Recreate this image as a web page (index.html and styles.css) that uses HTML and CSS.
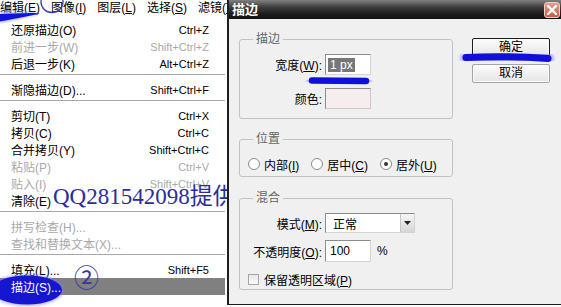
FILE: index.html
```html
<!DOCTYPE html>
<html>
<head>
<meta charset="utf-8">
<link rel="stylesheet" href="styles.css">
</head>
<body>
<div class="screen">
  <div class="app">
    <div class="menubar">
      <span class="mb-item">编辑(<u>E</u>)</span>
      <span class="mb-item">图像(<u>I</u>)</span>
      <span class="mb-item">图层(<u>L</u>)</span>
      <span class="mb-item">选择(<u>S</u>)</span>
      <span class="mb-item">滤镜(<u>T</u>)</span>
    </div>
    <ul class="menu">
      <li class="mi"><span class="lbl">还原描边(O)</span><span class="sc">Ctrl+Z</span></li>
      <li class="mi dis"><span class="lbl">前进一步(W)</span><span class="sc">Shift+Ctrl+Z</span></li>
      <li class="mi"><span class="lbl">后退一步(K)</span><span class="sc">Alt+Ctrl+Z</span></li>
      <li class="sep"></li>
      <li class="mi"><span class="lbl">渐隐描边(D)...</span><span class="sc">Shift+Ctrl+F</span></li>
      <li class="sep"></li>
      <li class="mi"><span class="lbl">剪切(T)</span><span class="sc">Ctrl+X</span></li>
      <li class="mi"><span class="lbl">拷贝(C)</span><span class="sc">Ctrl+C</span></li>
      <li class="mi"><span class="lbl">合并拷贝(Y)</span><span class="sc">Shift+Ctrl+C</span></li>
      <li class="mi dis"><span class="lbl">粘贴(P)</span><span class="sc">Ctrl+V</span></li>
      <li class="mi dis"><span class="lbl">贴入(I)</span><span class="sc">Shift+Ctrl+V</span></li>
      <li class="mi"><span class="lbl">清除(E)</span></li>
      <li class="sep"></li>
      <li class="mi dis"><span class="lbl">拼写检查(H)...</span></li>
      <li class="mi dis"><span class="lbl">查找和替换文本(X)...</span></li>
      <li class="sep"></li>
      <li class="mi"><span class="lbl">填充(L)...</span><span class="sc">Shift+F5</span></li>
      <li class="mi hl"><span class="lbl">描边(S)...</span></li>
    </ul>
    <div class="qq">QQ281542098提供</div>
    <div class="circ2">②</div>
    <svg class="blob" width="80" height="45" viewBox="0 0 80 45">
      <defs>
        <filter id="bsoft" x="-30%" y="-60%" width="160%" height="220%"><feGaussianBlur stdDeviation="1.6"/></filter>
      </defs>
      <ellipse cx="27" cy="28" rx="37" ry="16" fill="#7a7aff" opacity="0.55" filter="url(#bsoft)"/>
      <ellipse cx="27" cy="28" rx="35" ry="14.5" fill="#1616d0"/>
    </svg>
  </div>

  <div class="dialog">
    <div class="titlebar">
      <span class="title">描边</span>
      <span class="close">
        <svg width="14" height="14" viewBox="0 0 14 14"><path d="M3,3 L11,11 M11,3 L3,11" stroke="#fff" stroke-width="2.4" stroke-linecap="round"/></svg>
      </span>
    </div>
    <div class="dbody">
      <div class="groups">
        <fieldset class="grp g1">
          <legend>描边</legend>
          <div class="rows r1">
            <div class="row"><span class="lab">宽度(<u>W</u>):</span><span class="inp"><span class="seltext">1 px</span></span></div>
            <div class="row gap13"><span class="lab">颜色:</span><span class="swatch"></span></div>
          </div>
        </fieldset>
        <fieldset class="grp g2">
          <legend>位置</legend>
          <div class="radios">
            <span class="radio"><span class="rb"></span><span class="rtxt">内部(<u>I</u>)</span></span>
            <span class="radio"><span class="rb"></span><span class="rtxt">居中(<u>C</u>)</span></span>
            <span class="radio"><span class="rb on"></span><span class="rtxt">居外(<u>U</u>)</span></span>
          </div>
        </fieldset>
        <fieldset class="grp g3">
          <legend>混合</legend>
          <div class="rows r3">
            <div class="row h20"><span class="lab">模式(<u>M</u>):</span><span class="select"><span class="seltxt">正常</span><span class="selbtn"><svg width="7" height="4" viewBox="0 0 7 4"><path d="M0,0 L7,0 L3.5,4 Z" fill="#222"/></svg></span></span></div>
            <div class="row h22 gap7"><span class="lab">不透明度(<u>O</u>):</span><span class="inp tall"><span class="val">100</span></span><span class="pct">%</span></div>
            <div class="chkrow"><span class="cb"></span><span class="ctxt">保留透明区域(<u>P</u>)</span></div>
          </div>
        </fieldset>
      </div>
      <div class="buttons">
        <button class="btn def">确定</button>
        <button class="btn">取消</button>
      </div>
    </div>
  </div>

  <svg class="marks" width="561" height="307" viewBox="0 0 561 307">
    <defs>
      <filter id="soft" x="-20%" y="-100%" width="140%" height="300%"><feGaussianBlur stdDeviation="1.6"/></filter>
    </defs>
    <path d="M0,12.5 C12,12 28,11.5 42,12.5 C30,16.5 14,20.5 0,23 Z" fill="#7a7aff" opacity="0.55" filter="url(#soft)"/>
    <path d="M0,14 C12,13.5 28,13 40,13.5 C29,16 14,19 0,21.5 Z" fill="#1212dc"/>
    <ellipse cx="52" cy="2" rx="11" ry="10.5" fill="none" stroke="#3a3aa8" stroke-width="1.3"/>
    <path d="M312,80.5 L366,81" stroke="#7a7aff" stroke-width="11" stroke-linecap="round" opacity="0.55" filter="url(#soft)"/>
    <path d="M312,80.5 L366,81" stroke="#1010dc" stroke-width="6.5" stroke-linecap="round"/>
    <path d="M466,57.5 Q505,55.5 548,58.5" stroke="#7a7aff" stroke-width="12" fill="none" stroke-linecap="round" opacity="0.55" filter="url(#soft)"/>
    <path d="M466,57.5 Q505,55.5 548,58.5" stroke="#1010dc" stroke-width="7" fill="none" stroke-linecap="round"/>
  </svg>
</div>
</body>
</html>
```

FILE: styles.css
```css
* { box-sizing: border-box; }
html, body { margin: 0; padding: 0; }
body {
  width: 561px;
  height: 307px;
  overflow: hidden;
  background: #fff;
  font-family: "Liberation Sans", "Noto Sans CJK SC", sans-serif;
  font-size: 12px;
  color: #000;
}
.screen {
  position: relative;
  display: flex;
  width: 561px;
  height: 307px;
  overflow: hidden;
  background: #fff;
}

/* ---------- left: application menu ---------- */
.app {
  position: relative;
  flex: none;
  width: 227px;
  height: 307px;
  overflow: hidden;
  background: #fff;
}
.menubar {
  display: flex;
  gap: 11px;
  height: 18px;
  line-height: 16px;
  white-space: nowrap;
}
.menu {
  list-style: none;
  margin: 0;
  padding: 3px 0 0;
}
.mi {
  display: flex;
  justify-content: space-between;
  align-items: center;
  height: 17px;
  padding: 0 16px 0 11px;
  margin-right: 2px;
  white-space: nowrap;
}
.mi .sc { font-size: 11px; }
.mi.dis { color: #a9a9a9; }
.mi.hl { background: #808080; color: #fff; }
.mi.hl .lbl { position: relative; z-index: 2; }
.sep {
  height: 0;
  border-top: 1px solid #a8a8a8;
  margin: 2px 2px 6px 0;
}
.qq {
  position: absolute;
  left: 53px;
  top: 185px;
  font-family: "Liberation Serif", "Noto Sans CJK SC", serif;
  font-size: 23px;
  line-height: 23px;
  color: #2c2c9e;
  white-space: nowrap;
  z-index: 3;
}
.circ2 {
  position: absolute;
  left: 74px;
  top: 264px;
  font-family: "Noto Sans CJK SC", sans-serif;
  font-size: 25px;
  line-height: 25px;
  color: #3535a8;
  z-index: 3;
}
.blob {
  position: absolute;
  left: 0;
  top: 262px;
  z-index: 1;
}

/* ---------- right: dialog ---------- */
.dialog {
  flex: none;
  width: 334px;
  height: 305px;
  background: #f0f0f0;
  border-left: 2px solid #1e1e1e;
  border-bottom: 1px solid #1e1e1e;
  display: flex;
  flex-direction: column;
}
.titlebar {
  flex: none;
  height: 19px;
  display: flex;
  align-items: center;
  justify-content: space-between;
  padding: 0 1px 0 3px;
  background: linear-gradient(#808080 0%, #3a3a3a 40%, #1b1b1b 75%, #121212 100%);
}
.title {
  color: #fff;
  font-weight: bold;
  font-size: 13px;
  line-height: 15px;
}
.close {
  width: 16px;
  height: 16px;
  display: flex;
  align-items: center;
  justify-content: center;
  border: 1px solid #f2cfc6;
  border-radius: 3px;
  background: linear-gradient(#e6a090, #c65c47);
}
.dbody {
  display: flex;
  padding: 14px 0 0 10px;
}
.groups {
  flex: none;
  width: 214px;
  display: flex;
  flex-direction: column;
}
.grp {
  margin: 0;
  padding: 0;
  min-width: 0;
  border: 1px solid #c2c2c2;
  border-radius: 3px;
}
.grp legend {
  margin-left: 13px;
  padding: 0 3px;
  height: 13px;
  line-height: 13px;
  font-size: 12px;
  color: #666;
}
.g2 { margin-top: 14px; }
.g3 { margin-top: 15px; }

.rows { display: flex; flex-direction: column; }
.r1 { padding: 8px 0 9px; }
.r3 { padding: 8px 0 3px; }
.row {
  display: flex;
  align-items: center;
  height: 21px;
}
.row.h20 { height: 20px; }
.row.h22 { height: 22px; }
.gap13 { margin-top: 13px; }
.gap7 { margin-top: 7px; }
.lab {
  width: 82px;
  margin-right: 3px;
  text-align: right;
  white-space: nowrap;
}
.inp {
  width: 46px;
  height: 21px;
  display: flex;
  align-items: center;
  padding-left: 2px;
  background: #fff;
  border: 1px solid;
  border-color: #8c8c8c #d4d4d4 #d4d4d4 #8c8c8c;
}
.inp.tall { height: 22px; }
.seltext {
  background: #777;
  color: #fff;
  padding: 0 2px;
  line-height: 14px;
}
.val { padding-left: 2px; }
.pct { margin-left: 6px; }
.swatch {
  width: 46px;
  height: 21px;
  background: #f6eeee;
  border: 1px solid;
  border-color: #8c8c8c #c8c8c8 #c8c8c8 #8c8c8c;
}
.select {
  width: 90px;
  height: 20px;
  display: flex;
  align-items: center;
  justify-content: space-between;
  background: #fff;
  border: 1px solid;
  border-color: #8c8c8c #d4d4d4 #d4d4d4 #8c8c8c;
}
.seltxt { padding-left: 7px; }
.selbtn {
  width: 14px;
  height: 18px;
  display: flex;
  align-items: center;
  justify-content: center;
  background: linear-gradient(#f6f6f6, #d6d6d6);
  border-left: 1px solid #c6c6c6;
}

.radios {
  display: flex;
  align-items: center;
  gap: 12px;
  height: 14px;
  margin: 11px 0 5px;
  padding-left: 8px;
}
.radio {
  display: flex;
  align-items: center;
  gap: 4px;
  white-space: nowrap;
}
.rb {
  width: 12px;
  height: 12px;
  border-radius: 50%;
  border: 1px solid #8a8a8a;
  background: #fff;
  display: flex;
  align-items: center;
  justify-content: center;
}
.rb.on::after {
  content: "";
  width: 4px;
  height: 4px;
  border-radius: 50%;
  background: #333;
}
.chkrow {
  display: flex;
  align-items: center;
  gap: 5px;
  height: 14px;
  margin-top: 10px;
  padding-left: 8px;
  white-space: nowrap;
}
.cb {
  width: 11px;
  height: 11px;
  border: 1px solid #a6a6a6;
  background: linear-gradient(#e8e8e8, #fafafa);
}

.buttons {
  display: flex;
  flex-direction: column;
  gap: 7px;
  margin: 5px 0 0 19px;
}
.btn {
  width: 78px;
  height: 19px;
  padding: 0;
  font-family: "Liberation Sans", "Noto Sans CJK SC", sans-serif;
  font-size: 12px;
  line-height: 17px;
  color: #000;
  border: 1px solid #a4a4a4;
  border-radius: 2px;
  background: linear-gradient(#fdfdfd, #e4e4e4);
  box-shadow: inset 0 0 0 1px #fafafa;
}
.btn.def { border-color: #1c1c1c; }

/* annotations on top */
.marks {
  position: absolute;
  left: 0;
  top: 0;
  z-index: 5;
  pointer-events: none;
}
```
